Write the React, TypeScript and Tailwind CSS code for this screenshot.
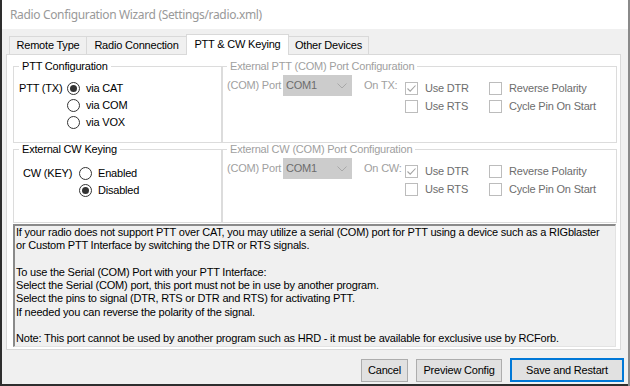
import React from "react";

function Radio({ checked }: { checked?: boolean }) {
  return (
    <span className="w-[13px] h-[13px] rounded-full border border-[#333333] bg-white flex items-center justify-center shrink-0">
      {checked && <span className="w-[7px] h-[7px] rounded-full bg-[#333333]" />}
    </span>
  );
}

function Check({ checked }: { checked?: boolean }) {
  return (
    <span className="w-[13px] h-[13px] border border-[#bcbcbc] bg-white flex items-center justify-center shrink-0">
      {checked && (
        <svg width="11" height="11" viewBox="0 0 11 11">
          <path d="M1.5 5.5 L4.2 8.2 L9.5 2.5" fill="none" stroke="#a3a3a3" strokeWidth="1.1" />
        </svg>
      )}
    </span>
  );
}

function CheckRow({ label, checked }: { label: string; checked?: boolean }) {
  return (
    <div className="h-[18px] flex items-center gap-[7px] text-[#6d6d6d]">
      <Check checked={checked} />
      <span>{label}</span>
    </div>
  );
}

function PortGroup({ title, on, h }: { title: string; on: string; h: string }) {
  return (
    <fieldset className={`w-[395px] ${h} border border-[#dcdcdc]`}>
      <legend className="ml-[4px] px-[3px] text-[#a0a0a0]">{title}</legend>
      <div className="flex items-start pl-[4px]">
        <span className="w-[56px] mt-[6px] text-[#a0a0a0]">(COM) Port</span>
        <div className="w-[69px] h-[21px] mt-[2px] bg-[#cccccc] border border-[#cccccc] flex items-center pl-[2px] text-[#6d6d6d]">
          COM1
          <svg className="ml-auto mr-[4px]" width="10" height="6" viewBox="0 0 10 6">
            <path d="M0.5 0.5 L5 5 L9.5 0.5" fill="none" stroke="#a8a8a8" strokeWidth="1" />
          </svg>
        </div>
        <span className="ml-[12px] w-[41px] mt-[6px] text-[#a0a0a0]">{on}</span>
        <div className="mt-[6px] w-[84px] flex flex-col">
          <CheckRow label="Use DTR" checked />
          <CheckRow label="Use RTS" />
        </div>
        <div className="mt-[6px] flex flex-col">
          <CheckRow label="Reverse Polarity" />
          <CheckRow label="Cycle Pin On Start" />
        </div>
      </div>
    </fieldset>
  );
}

const info = `If your radio does not support PTT over CAT, you may utilize a serial (COM) port for PTT using a device such as a RIGblaster
or Custom PTT Interface by switching the DTR or RTS signals.

To use the Serial (COM) Port with your PTT Interface:
Select the Serial (COM) port, this port must not be in use by another program.
Select the pins to signal (DTR, RTS or DTR and RTS) for activating PTT.
If needed you can reverse the polarity of the signal.

Note: This port cannot be used by another program such as HRD - it must be available for exclusive use by RCForb.`;

export default function App() {
  return (
    <div className="w-[630px] h-[386px] flex bg-[#2e2e2e] font-['Liberation_Sans',Arial,sans-serif] text-[11px] leading-[13px] tracking-[-0.2px] whitespace-nowrap text-black overflow-hidden">
      <div className="w-[2px] bg-[#2e2e2e]" />
      <div className="w-[626px] h-[384px] flex flex-col bg-[#f0f0f0]">
        <div className="h-[29px] bg-white pl-[8px] flex items-center font-['Noto_Sans',sans-serif] text-[12px] tracking-[-0.35px] text-[#999999]">
          Radio Configuration Wizard (Settings/radio.xml)
        </div>

        <div className="pt-[5px] pl-[7px] h-[25px] flex items-end">
          <div className="w-[77px] h-[18px] border-l border-t border-[#d9d9d9] flex items-center justify-center">
            Remote Type
          </div>
          <div className="w-[100px] h-[18px] border-l border-t border-[#d9d9d9] flex items-center justify-center">
            Radio Connection
          </div>
          <div className="relative z-10 w-[103px] h-[21px] -mb-[1px] pb-[2px] bg-white border-l border-t border-r border-[#d9d9d9] flex items-center justify-center">
            PTT &amp; CW Keying
          </div>
          <div className="w-[80px] h-[18px] border-t border-r border-[#d9d9d9] flex items-center justify-center">
            Other Devices
          </div>
        </div>

        <div className="ml-[4px] w-[615px] h-[296px] bg-white border border-[#d9d9d9] pt-[5px] pl-[6px]">
          <div className="flex">
            <fieldset className="w-[209px] h-[83px] border border-[#dcdcdc]">
              <legend className="ml-[5px] px-[3px]">PTT Configuration</legend>
              <div className="flex pl-[5px] pt-[7px]">
                <span className="w-[48px] h-[17px] flex items-center">PTT (TX)</span>
                <div className="flex flex-col">
                  {["via CAT", "via COM", "via VOX"].map((l, i) => (
                    <div key={l} className="h-[17px] flex items-center gap-[6px]">
                      <Radio checked={i === 0} />
                      <span>{l}</span>
                    </div>
                  ))}
                </div>
              </div>
            </fieldset>
            <PortGroup title="External PTT (COM) Port Configuration" on="On TX:" h="h-[83px]" />
          </div>

          <div className="flex">
            <fieldset className="w-[209px] h-[80px] border border-[#dcdcdc]">
              <legend className="ml-[5px] px-[3px]">External CW Keying</legend>
              <div className="flex pl-[9px] pt-[9px]">
                <span className="w-[56px] h-[17px] flex items-center">CW (KEY)</span>
                <div className="flex flex-col">
                  {["Enabled", "Disabled"].map((l, i) => (
                    <div key={l} className="h-[17px] flex items-center gap-[6px]">
                      <Radio checked={i === 1} />
                      <span>{l}</span>
                    </div>
                  ))}
                </div>
              </div>
            </fieldset>
            <PortGroup title="External CW (COM) Port Configuration" on="On CW:" h="h-[80px]" />
          </div>

          <div className="mt-[1px] w-[603px] h-[123px] overflow-hidden bg-[#f0f0f0] border-t-2 border-l-2 border-r border-b border-t-[#8a8a8a] border-l-[#8a8a8a] border-r-[#e3e3e3] border-b-[#e3e3e3] pl-[1px] whitespace-pre leading-[13.25px]">
            {info}
          </div>
        </div>

        <div className="mt-[9px] pr-[4px] flex justify-end gap-[8px]">
          <button className="w-[47px] h-[23px] bg-[#e1e1e1] border border-[#adadad]">Cancel</button>
          <button className="w-[86px] h-[23px] bg-[#e1e1e1] border border-[#adadad]">Preview Config</button>
          <button className="w-[114px] h-[24px] -mt-[1px] bg-[#e1e1e1] border-2 border-[#0078d7]">Save and Restart</button>
        </div>
      </div>
      <div className="w-[2px] bg-[#8a8a8a]" />
    </div>
  );
}
